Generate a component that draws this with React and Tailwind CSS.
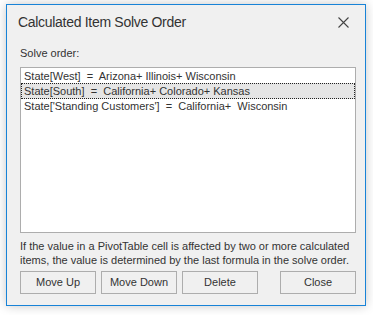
export default function App() {
  const font = { fontFamily: '"Segoe UI", "Liberation Sans", Arial, sans-serif' };
  return (
    <div className="w-[373px] h-[315px] bg-white pt-[4px] pl-[6px]" style={font}>
      <div className="w-[360px] h-[302px] bg-[#f0f0f0] border border-[#1883d7] shadow-[0_0_10px_rgba(0,0,0,0.22)] flex flex-col">
        <div className="h-[35px] flex items-center justify-between pl-[11px] pr-[16px]">
          <span className="text-[14px] tracking-[-0.3px] text-[#333333]">Calculated Item Solve Order</span>
          <svg width="11" height="11" viewBox="0 0 11 11">
            <path d="M0.5 0.5 L10.5 10.5 M10.5 0.5 L0.5 10.5" stroke="#444" strokeWidth="1.1" fill="none" />
          </svg>
        </div>
        <div className="pl-[13px] pr-[9px] flex flex-col">
          <div className="mt-[5px] h-[16px] leading-[16px] text-[11px] text-[#333]">Solve order:</div>
          <div className="mt-[6px] h-[166px] bg-white border border-[#adadad] flex flex-col text-[11px] text-[#333] whitespace-pre">
            <div className="h-[15px] leading-[16px] pl-[3px]">State[West]  =  Arizona+ Illinois+ Wisconsin</div>
            <div className="h-[16px] leading-[14px] pl-[2px] bg-[#e5e5e5] border border-dotted border-[#222]">State[South]  =  California+ Colorado+ Kansas</div>
            <div className="h-[15px] leading-[15px] pl-[3px]">State['Standing Customers']  =  California+  Wisconsin</div>
          </div>
          <div className="mt-[6px] text-[11px] leading-[14px] text-[#333]">
            If the value in a PivotTable cell is affected by two or more calculated items, the value is determined by the last formula in the solve order.
          </div>
          <div className="mt-[4px] flex text-[11px] text-[#333]">
            <button className="w-[76px] h-[23px] border border-[#adadad] bg-[#f0f0f0]">Move Up</button>
            <button className="ml-[5px] w-[76px] h-[23px] border border-[#adadad] bg-[#f0f0f0]">Move Down</button>
            <button className="ml-[5px] w-[76px] h-[23px] border border-[#adadad] bg-[#f0f0f0]">Delete</button>
            <button className="ml-auto w-[76px] h-[23px] border border-[#adadad] bg-[#f0f0f0]">Close</button>
          </div>
        </div>
      </div>
    </div>
  );
}
